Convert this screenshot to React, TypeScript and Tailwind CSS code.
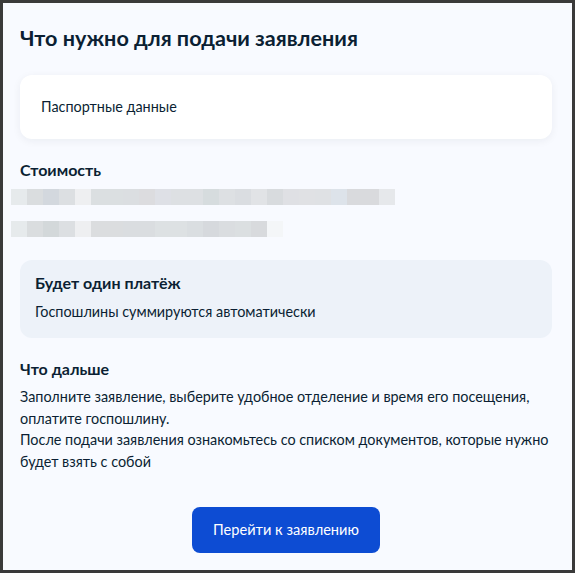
const row1 = [
  "#e6eaec", "#dadddf", "#d3d8de", "#dcdfe2", "#eeeff1", "#dbdfe1", "#dbdfe1", "#dbdee1",
  "#dcdcdf", "#dee0e6", "#dde0e3", "#dde0e3", "#d6dcde", "#dde0e3", "#dadde1", "#e1e3e6",
  "#d8dbde", "#dfe0e4", "#e0e1e4", "#dfe1e4", "#dde3ea", "#d9dadd", "#d9dadd", "#e6e8eb",
];
const row2 = [
  "#e6eaec", "#dadddf", "#d3d8da", "#dcdfe2", "#eeeff1", "#dbdddf", "#dbdddf", "#dadde0",
  "#dadde0", "#dde1e3", "#dde1e3", "#dadee1", "#d6d9dd", "#dadde0", "#dbdfe1", "#d8dadd",
  "#f4f6f8",
];

function Blur({ colors }: { colors: string[] }) {
  return (
    <div className="flex h-4">
      {colors.map((c, i) => (
        <div key={i} className="h-4 w-4" style={{ backgroundColor: c }} />
      ))}
    </div>
  );
}

export default function App() {
  return (
    <div
      className="h-[573px] w-[575px] border-[3px] border-[#3a3a3a] bg-[#f8faff] text-[#0b1f33]"
      style={{ fontFamily: "Lato, 'Noto Sans', sans-serif" }}
    >
      <div className="pl-[17px] pr-[20px] pt-[21px]">
        <h1 className="text-[21.6px] font-bold leading-[28px]">Что нужно для подачи заявления</h1>

        <div className="mt-[23px] h-16 rounded-xl bg-white pl-[21px] pt-[22px] text-[14.4px] leading-[20px] shadow-[0_2px_8px_rgba(11,31,51,0.06)]">
          Паспортные данные
        </div>

        <h2 className="mt-[19px] text-[16px] font-bold leading-[24px]">Стоимость</h2>
        <div className="-ml-[9px] mt-[7px] flex flex-col gap-4">
          <Blur colors={row1} />
          <Blur colors={row2} />
        </div>

        <div className="mt-[23px] h-[78px] rounded-xl bg-[#edf2f9] px-[15px] pt-[11px]">
          <p className="text-[16px] font-bold leading-[24px]">Будет один платёж</p>
          <p className="mt-[7px] text-[14.4px] leading-[20px]">Госпошлины суммируются автоматически</p>
        </div>

        <h2 className="mt-[19px] text-[16px] font-bold leading-[24px]">Что дальше</h2>
        <p className="mt-[5px] text-[14.4px] leading-[21.5px]">
          Заполните заявление, выберите удобное отделение и время его посещения, оплатите госпошлину.
          <br />
          После подачи заявления ознакомьтесь со списком документов, которые нужно будет взять с собой
        </p>

        <div className="mt-[35px] flex justify-center">
          <button className="h-[46px] w-[188px] rounded-lg bg-[#0d4cd3] text-[14.6px] text-white">
            Перейти к заявлению
          </button>
        </div>
      </div>
    </div>
  );
}
